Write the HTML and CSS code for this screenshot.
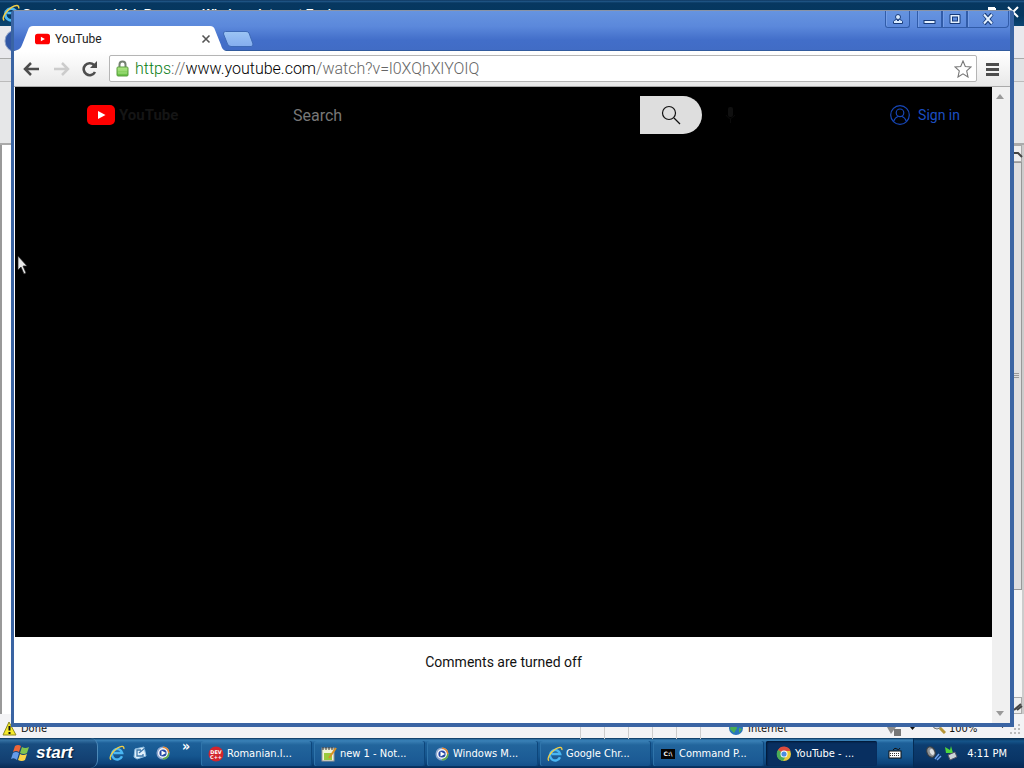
FILE: index.html
```html
<!DOCTYPE html>
<html lang="en">
<head>
<meta charset="utf-8">
<title>YouTube</title>
<link rel="stylesheet" href="styles.css">
</head>
<body>
<svg class="defs" aria-hidden="true">
  <defs>
    <linearGradient id="lock-fill" x1="0" y1="0" x2="0" y2="1"><stop offset="0" stop-color="#b4ea86"/><stop offset="1" stop-color="#5dbb3c"/></linearGradient>
    <linearGradient id="new-fill" x1="0" y1="0" x2="0" y2="1"><stop offset="0" stop-color="#9cc5f4"/><stop offset="1" stop-color="#84adee"/></linearGradient>
    <symbol id="ie" viewBox="0 0 16 16">
      <path d="M13 11.2A5.2 5.2 0 1 1 13.2 8H4.6" fill="none" stroke="#4ab6f2" stroke-width="2.4"/>
      <path d="M2 14.6C-.5 13 3 6.500 8.500 3C12 .8 15.500 .5 14.800 4" fill="none" stroke="#f3cf45" stroke-width="1.300"/>
    </symbol>
    <symbol id="media" viewBox="0 0 16 16">
      <circle cx="8" cy="8" r="5.800" fill="#f4f6fb" stroke="#8da7cf" stroke-width="1.500"/>
      <path d="M8 2.200A5.800 5.800 0 0 1 13.800 8" fill="none" stroke="#e98b34" stroke-width="1.500"/>
      <path d="M13.800 8A5.800 5.800 0 0 1 8 13.800" fill="none" stroke="#62ad45" stroke-width="1.500"/>
      <circle cx="8" cy="8" r="3.600" fill="#2447a5"/><path d="M6.500 5.500L11 8L6.500 10.500Z" fill="#fff"/>
    </symbol>
    <symbol id="yt" viewBox="0 0 28 20">
      <rect width="28" height="20" rx="5" fill="#f00"/><path d="M11 6L18.500 10L11 14Z" fill="#fff"/>
    </symbol>
  </defs>
</svg>
<div class="screen">
  <div class="desktop">
    <section class="ie-window" aria-label="Internet Explorer">
      <header class="ie-title"><svg width="18" height="18"><use href="#ie"/></svg><span>Google Chrome Web Browser - Windows Internet Explorer</span>
        <svg class="ie-controls" width="40" height="20" viewBox="0 0 40 20"><path d="M8 4H15M8 5H15M15 4V10" fill="none" stroke="#fff" stroke-width="2"/><path d="M28 3L38 13M38 3L28 13" stroke="#fff" stroke-width="2"/></svg>
      </header>
      <div class="ie-nav"><svg width="24" height="24"><circle cx="12" cy="12" r="11" fill="#3156a5" stroke="#8fa3c8"/></svg></div>
      <div class="ie-menu"></div>
      <div class="ie-tabs"></div>
      <div class="ie-body"><div class="ie-scroll">
        <div class="ie-arrow"><svg width="10" height="10"><path d="M1 3L5 3L9 7" fill="none" stroke="#444" stroke-width="2"/></svg></div>
        <div class="ie-thumb"><span></span></div>
        <div class="ie-arrow"><svg width="10" height="10"><path d="M1 8L8 2M4 8L9 4" fill="none" stroke="#444" stroke-width="2"/></svg></div>
      </div></div>
      <footer class="ie-status">
        <svg width="15" height="15" viewBox="0 0 15 15"><path d="M7 1L14 14H1Z" fill="#f5ea28" stroke="#8b8721"/><path d="M7.500 5V9.500M7.500 11V13" stroke="#111" stroke-width="2"/></svg>
        <span class="ie-done">Done</span>
        <span class="ie-cells"><i></i><i></i><i></i><i></i><i></i><i></i></span>
        <span class="ie-zone"><svg width="16" height="16"><circle cx="8" cy="8" r="7" fill="#2876ba"/><path d="M3 4L8 3L9 8L6 13L2 9ZM11 8L14 9L11 13Z" fill="#48ad55"/></svg>Internet</span>
        <span class="ie-protect"><svg width="30" height="16"><path d="M1 6H10L5 13Z" fill="#8b8b8b"/><rect x="8" y="8" width="7" height="7" fill="#777"/><path d="M24 6H29L26.500 9Z" fill="#111"/></svg></span>
        <span class="ie-zoom"><svg width="14" height="14"><circle cx="5" cy="5" r="4" fill="#d5dbe2" stroke="#777"/><path d="M8 8L13 13" stroke="#b69637" stroke-width="3"/></svg>100%<svg class="ie-drop" width="6" height="12"><path d="M0 5H5L2.500 8Z" fill="#111"/></svg></span>
        <svg class="ie-grip" width="12" height="12"><path d="M8 2h2M4 6h2M8 6h2M0 10h2M4 10h2M8 10h2" stroke="#bbb" stroke-width="2"/></svg>
      </footer>
    </section>

    <section class="browser" aria-label="Chrome">
      <header class="tabstrip">
        <div class="tab">
          <svg class="tab-shape" viewBox="0 0 212 25" preserveAspectRatio="none"><path d="M0 25C5 24 7 22 8 19L14 4Q15 0 19 0H196Q200 0 201 4L207 19Q208 24 212 25Z" fill="#fff"/></svg>
          <svg class="tab-icon" width="15" height="12"><use href="#yt"/></svg>
          <span class="tab-name">YouTube</span>
          <button class="tab-close" aria-label="Close tab"><svg width="10" height="10"><path d="M1.500 1.500L8.500 8.500M8.500 1.500L1.500 8.500" stroke="#555" stroke-width="1.600"/></svg></button>
        </div>
        <button class="new-tab" aria-label="New tab"><svg width="32" height="16"><path d="M3.500 .5H24Q26 .5 27 2L31 13Q31 15.500 29 15.500H9Q6.500 15.500 5.500 13L1.500 3Q1 .5 3.500 .5Z" fill="url(#new-fill)" stroke="#3d69b5"/></svg></button>
        <div class="controls">
          <button class="control user" aria-label="User"><svg width="12" height="12"><path d="M1.500 10.500V8.500Q2 7 4.500 6.500L6 8L7.500 6.500Q10 7 10.500 8.500V10.500Z" fill="#d9ebff" stroke="#173a78"/><circle cx="6" cy="4" r="2.500" fill="#d9ebff" stroke="#173a78"/></svg></button>
          <div class="control-set">
            <button class="control" aria-label="Minimize"><svg width="13" height="12"><rect x="1" y="7.500" width="11" height="3" fill="#e4f1ff" stroke="#173a78"/></svg></button>
            <button class="control" aria-label="Maximize"><svg width="12" height="12"><path d="M1 1.500H11V10.500H1Z" fill="#e4f1ff" stroke="#173a78"/><rect x="3.500" y="4" width="5" height="4" fill="#5d8bdc" stroke="#173a78"/></svg></button>
            <button class="control close" aria-label="Close"><svg width="12" height="12"><path d="M2 1L10 11M10 1L2 11" stroke="#173a78" stroke-width="4"/><path d="M2 1.500L10 10.500M10 1.500L2 10.500" stroke="#e4f1ff" stroke-width="2"/></svg></button>
          </div>
        </div>
      </header>
      <nav class="toolbar">
        <button aria-label="Back"><svg width="18" height="16"><path d="M2 8H16M8 2L2 8L8 14" fill="none" stroke="#4d4d4d" stroke-width="2.500"/></svg></button>
        <button aria-label="Forward"><svg width="18" height="16"><path d="M2 8H16M10 2L16 8L10 14" fill="none" stroke="#ccc" stroke-width="2.500"/></svg></button>
        <button aria-label="Reload"><svg width="18" height="16"><path d="M14 11A6 6 0 1 1 13 4" fill="none" stroke="#4d4d4d" stroke-width="2.600"/><path d="M16 0V7H9Z" fill="#4d4d4d"/></svg></button>
        <div class="address">
          <svg width="13" height="17"><path d="M3.500 8V4.500Q3.500 1.500 6.500 1.500T9.500 4.500V8" fill="none" stroke="#748071" stroke-width="2"/><rect x="1" y="7" width="11" height="9" rx="1" fill="url(#lock-fill)" stroke="#5b9e40"/><path d="M2 10H11M2 13H11" stroke="#a5df81"/></svg>
          <div class="url" role="textbox" aria-label="Address"><span class="secure">https</span>://<span class="host">www.youtube.com</span>/watch?v=l0XQhXlYOIQ</div>
          <button class="star" aria-label="Bookmark"><svg width="18" height="18"><path d="M9 1L11.300 6.500L17 7L12.700 10.900L14 17L9 13.800L4 17L5.300 10.900L1 7L6.700 6.500Z" fill="#fff" stroke="#777" stroke-width="1.100"/></svg></button>
        </div>
        <button class="menu" aria-label="Menu"><svg width="14" height="14"><path d="M1 2.500H14M1 7.500H14M1 12.500H14" stroke="#4d4d4d" stroke-width="3"/></svg></button>
      </nav>
      <div class="viewport">
        <main class="page">
          <div class="watch">
            <header class="masthead">
              <a class="logo" href="#"><svg width="28" height="20"><use href="#yt"/></svg><span>YouTube</span></a>
              <form class="search"><input type="text" placeholder="Search" aria-label="Search"><button type="button" aria-label="Search"><svg width="20" height="20"><circle cx="8" cy="8" r="6.500" fill="none" stroke="#111" stroke-width="1.200"/><path d="M13 13L19 19" stroke="#111" stroke-width="1.300"/></svg></button></form>
              <button class="mic" aria-label="Voice search"><svg width="14" height="18"><rect x="5" y="1" width="5" height="10" rx="2" fill="#101010"/><path d="M3 9Q7 16 12 9M7.500 13V17" fill="none" stroke="#0b0b0b"/></svg></button>
              <a class="sign-in" href="#"><svg width="20" height="20" fill="none" stroke="#1747b8" stroke-width="1.200"><circle cx="10" cy="10" r="9.300"/><circle cx="10" cy="7.800" r="3.800"/><path d="M3.500 16.500Q5 12.500 8 11.500M16.500 16.500Q15 12.500 12 11.500"/></svg>Sign in</a>
            </header>
          </div>
          <p class="comments">Comments are turned off</p>
        </main>
        <div class="scrollbar"><svg width="8" height="5"><path d="M0 5L4 0L8 5Z" fill="#999"/></svg><svg width="8" height="5"><path d="M0 0H8L4 5Z" fill="#999"/></svg></div>
      </div>
    </section>
    <svg class="cursor" width="12" height="20"><path d="M1 1V15L4 12L7 19L9 18L6 11H10Z" fill="#e8e8e8" stroke="#222" stroke-width=".7"/></svg>
  </div>

  <footer class="taskbar">
    <button class="start"><svg width="20" height="20" viewBox="0 0 20 20"><path d="M4 3Q7 1 10 3L8 9Q5 7 2 9Z" fill="#ed6538"/><path d="M11 4Q14 6 18 4L16 10Q13 12 9 10Z" fill="#82c44e"/><path d="M2 10Q5 8 8 10L6 17Q3 14 0 16Z" fill="#659ce9"/><path d="M9 11Q12 13 16 11L14 17Q11 19 7 17Z" fill="#fbd448"/></svg>start</button>
    <div class="quick">
      <button aria-label="Internet Explorer"><svg width="16" height="16"><use href="#ie"/></svg></button>
      <button aria-label="Show desktop"><svg width="16" height="16"><path d="M3 4L12 2L14 11L5 14L2 12Z" fill="#e2f1fb" stroke="#8dbde0"/><path d="M9 5H5V11H11V9M7 8L13 3" fill="none" stroke="#3e78ab" stroke-width="1.300"/></svg></button>
      <button aria-label="Media player"><svg width="16" height="16"><use href="#media"/></svg></button>
      <button class="more" aria-label="More">»</button>
    </div>
    <div class="tasks">
      <button class="task"><svg width="16" height="16"><circle cx="8" cy="8" r="7.500" fill="#d3242d"/><text x="8" y="8" class="tiny">DEV</text><text x="8" y="13" class="tiny">C++</text></svg><span>Romanian.l...</span></button>
      <button class="task"><svg width="16" height="16"><rect x="1" y="2" width="12" height="13" fill="#f1f4d9" stroke="#999"/><path d="M2 1V4M5 1V4M8 1V4M11 1V4" stroke="#333"/><path d="M3 7H11V14H3Z" fill="#9aca3c"/><path d="M8 12L15 2" stroke="#d99126" stroke-width="2"/></svg><span>new 1 - Not...</span></button>
      <button class="task"><svg width="16" height="16"><use href="#media"/></svg><span>Windows M...</span></button>
      <button class="task"><svg width="16" height="16"><use href="#ie"/></svg><span>Google Chr...</span></button>
      <button class="task"><svg width="16" height="16"><rect x="1" y="3" width="14" height="10" fill="#050505"/><text x="8" y="10" class="cmd">C:\</text></svg><span>Command P...</span></button>
      <button class="task active"><svg width="16" height="16"><circle cx="8" cy="8" r="7" fill="#e9c83c"/><path d="M8 8L2 4A7 7 0 0 1 14.500 5H8Z" fill="#de4b3d"/><path d="M8 8L2 4A7 7 0 0 0 7 15L10 10Z" fill="#4aac57"/><circle cx="8" cy="8" r="3.500" fill="#fff"/><circle cx="8" cy="8" r="2.600" fill="#4c8ce0"/></svg><span>YouTube - ...</span></button>
    </div>
    <button class="keyboard" aria-label="Keyboard"><svg width="14" height="12"><path d="M5 3Q7 0 9 2T12 1" fill="none" stroke="#111"/><rect x="1" y="4" width="12" height="7" fill="#fff" stroke="#111"/><path d="M2 6.500H12M2 8.500H12" stroke="#333" stroke-dasharray="1 1"/></svg></button>
    <div class="tray">
      <svg width="17" height="17"><ellipse cx="6" cy="7" rx="4" ry="5.500" fill="#8e9295" stroke="#3a3e42" transform="rotate(-25 6 7)"/><ellipse cx="7" cy="7" rx="2" ry="3" fill="#dfe2e4" transform="rotate(-25 7 7)"/><path d="M10 14L14 9M12 15L16 11" stroke="#6da0ed" stroke-width="1.500"/></svg>
      <svg width="14" height="16"><path d="M1 2L6 5L7 1L9 8L2 8Z" fill="#4fd63c"/><path d="M4 10L11 7L13 12L6 15Z" fill="#cdd4d8" stroke="#556"/></svg>
      <time>4:11 PM</time>
    </div>
  </footer>
</div>
</body>
</html>
```

FILE: styles.css
```css
* { box-sizing: border-box; }
body { margin: 0; font-family: Roboto, sans-serif; }
button { border: 0; padding: 0; background: none; font: inherit; color: inherit; display: flex; align-items: center; justify-content: center; }
a { text-decoration: none; }
svg { display: block; flex: none; }
.defs { position: absolute; width: 0; height: 0; }
.screen { height: 100vh; display: flex; flex-direction: column; overflow: hidden; }
.desktop { flex: 1; min-height: 0; position: relative; display: flex; }

/* Window in the background */
.ie-window { flex: 1; min-width: 0; display: flex; flex-direction: column; background: #f3f3f5; font: 11px "DejaVu Sans Condensed", "DejaVu Sans", sans-serif; }
.ie-title { height: 26px; display: flex; align-items: flex-start; gap: 2px; padding: 4px 4px 0 2px; background: linear-gradient(#03254a, #245b8d 1px, #073760 3px, #04375f 60%, #0b4572); color: #fff; font: bold 12px/16px "Liberation Sans", sans-serif; }
.ie-title span { flex: 1; padding-top: 2px; }
.ie-nav { height: 33px; padding: 3px 4px; background: #e9e9ed; border-bottom: 1px solid #aaa; }
.ie-menu { height: 23px; background: #e2e3e5; border-bottom: 1px solid #bbb; }
.ie-tabs { height: 63px; background: #e6e7e8; border-bottom: 2px solid #aaa; }
.ie-body { flex: 1; min-height: 0; display: flex; justify-content: flex-end; border-left: 2px solid #999; background: #fff; }
.ie-scroll { display: flex; flex-direction: column; width: 16px; border-right: 2px solid #ccc; background: #f5f5f5; }
.ie-arrow { height: 17px; padding: 4px; border: 1px solid #aaa; background: #eee; }
.ie-thumb { height: 428px; margin-bottom: auto; display: grid; place-items: center; background: #dededf; border: 1px solid #999; }
.ie-thumb span { width: 7px; height: 6px; background: repeating-linear-gradient(#999 0 1px, #ddd 1px 2px); }
.ie-status { height: 24px; display: flex; align-items: center; gap: 4px; padding: 5px 2px 0; color: #111; line-height: 18px; }
.ie-done { flex: 1; }
.ie-cells { display: flex; }
.ie-cells i { width: 24px; height: 20px; border-left: 1px solid #ccc; }
.ie-zone { display: flex; gap: 4px; width: 154px; }
.ie-protect { width: 42px; }
.ie-zoom { display: flex; gap: 3px; width: 74px; }
.ie-drop { margin-left: auto; }

/* Browser window */
.browser { position: absolute; inset: 10px 10px 11px 11px; display: flex; flex-direction: column; border: 3px solid #3a64a3; border-top: 1px solid #8a93a4; border-right-width: 4px; border-bottom-width: 4px; border-radius: 4px 4px 0 0; background: #3a64a3; }
.tabstrip { height: 40px; display: flex; align-items: flex-end; background: linear-gradient(#6694e0, #5b88db 40%, #426ec9 75%, #416cc5); border-bottom: 1px solid #315b9e; }
.tab { position: relative; width: 212px; height: 25px; margin-bottom: -1px; padding: 0 12px 0 21px; display: flex; align-items: center; gap: 5px; font-size: 12px; color: #222; }
.tab-shape { position: absolute; inset: 0; width: 100%; height: 100%; }
.tab-icon, .tab-name, .tab-close { position: relative; }
.tab-name { flex: 1; }
.tab-close { width: 16px; height: 20px; }
.new-tab { align-self: flex-end; margin-bottom: 3px; margin-left: -4px; }
.controls { margin-left: auto; align-self: flex-start; display: flex; gap: 7px; padding-right: 1px; }
.control { width: 25px; height: 17px; border: 1px solid #315ca9; border-top: 0; box-shadow: inset 1px 0 #759ee7; }
.user { border-radius: 0 0 3px 3px; }
.control-set { display: flex; }
.control.close { width: 42px; border-radius: 0 0 4px 0; }
.toolbar { height: 36px; display: flex; align-items: center; gap: 3px; padding: 0 6px 0 5px; background: linear-gradient(#fff, #f7f7f7 40%, #e8e8e8); border-bottom: 1px solid #aaa; }
.toolbar > button { width: 26px; height: 26px; }
.address { flex: 1; min-width: 0; height: 27px; margin-left: 3px; padding: 0 4px 0 6px; display: flex; align-items: center; gap: 6px; border: 1px solid #b5b5b5; border-radius: 2px; background: #fff; font-size: 16px; font-weight: 300; color: #666; }
.url { flex: 1; white-space: nowrap; overflow: hidden; }
.secure { color: #0a7d16; }
.host { color: #000; }
.toolbar > .menu { width: 24px; }
.viewport { flex: 1; min-height: 0; display: flex; border-left: 1px solid #fff; background: #fff; }
.page { flex: 1; min-width: 0; display: flex; flex-direction: column; }
.scrollbar { width: 18px; padding: 7px 4px; display: flex; flex-direction: column; justify-content: space-between; background: #f0f0f0; }
.watch { flex: 1; background: #000; }
.masthead { height: 56px; display: flex; align-items: center; padding: 0 32px 0 72px; }
.logo { display: flex; align-items: center; gap: 4px; width: 206px; color: #151515; font: bold 15px Roboto, sans-serif; }
.search { flex: 0 1 409px; min-width: 0; display: flex; }
.search input { flex: 1; min-width: 0; height: 38px; padding: 0; border: 0; background: transparent; color: #999; font: 16px Roboto, sans-serif; }
.search input::placeholder { color: #777; opacity: 1; }
.search button { width: 62px; height: 38px; border-radius: 0 19px 19px 0; background: #dedede; }
.mic { margin-left: 21px; }
.sign-in { margin-left: auto; display: flex; align-items: center; gap: 8px; color: #1c4fc2; font-size: 14px; }
.comments { height: 86px; margin: 0; padding-top: 15px; text-align: center; font-size: 14px; line-height: 20px; color: #111; }
.cursor { position: absolute; left: 17px; top: 255px; }

/* Taskbar */
.taskbar { height: 30px; display: flex; background: linear-gradient(#062f56, #3b83b9 2px, #1d6099 5px, #15568f 60%, #0c437a 85%, #052c59); color: #fff; font: 11px "DejaVu Sans Condensed", "DejaVu Sans", sans-serif; }
.start { width: 98px; gap: 5px; padding-right: 13px; border-right: 1px solid #4c89b8; border-radius: 0 8px 8px 0; background: linear-gradient(#072f56, #3673a5 2px, #184d80 6px, #123e70 80%, #082b55); font: italic bold 17px "Liberation Sans", sans-serif; text-shadow: 1px 1px 1px #001c3b; }
.quick { width: 103px; display: flex; align-items: center; gap: 7px; padding-left: 11px; }
.more { align-self: flex-start; font-size: 14px; font-weight: bold; margin-left: 4px; }
.tasks { flex: 1; min-width: 0; display: flex; gap: 2px; padding: 3px 0 2px; }
.task { flex: 0 1 112px; min-width: 0; justify-content: flex-start; gap: 3px; padding-left: 7px; border-radius: 2px; background: linear-gradient(#397fb5, #22659c 4px, #1b5a94 80%, #15518b); box-shadow: inset -1px 0 #0d467b, inset 1px 0 #2f74aa; white-space: nowrap; }
.task.active { padding-left: 10px; background: #082f60; box-shadow: inset 1px 1px 2px #001632; }
.tiny { font: bold 5px "DejaVu Sans", sans-serif; fill: #fff; text-anchor: middle; }
.cmd { font: bold 6px "DejaVu Sans", sans-serif; fill: #fff; text-anchor: middle; }
.keyboard { width: 36px; }
.tray { width: 111px; display: flex; align-items: center; gap: 2px; padding-left: 11px; border-left: 1px solid #042c55; background: linear-gradient(#062a4d, #15558a 3px, #0c3d70 7px, #093465 75%, #052854); }
.tray time { margin-left: auto; padding-right: 17px; }
```
